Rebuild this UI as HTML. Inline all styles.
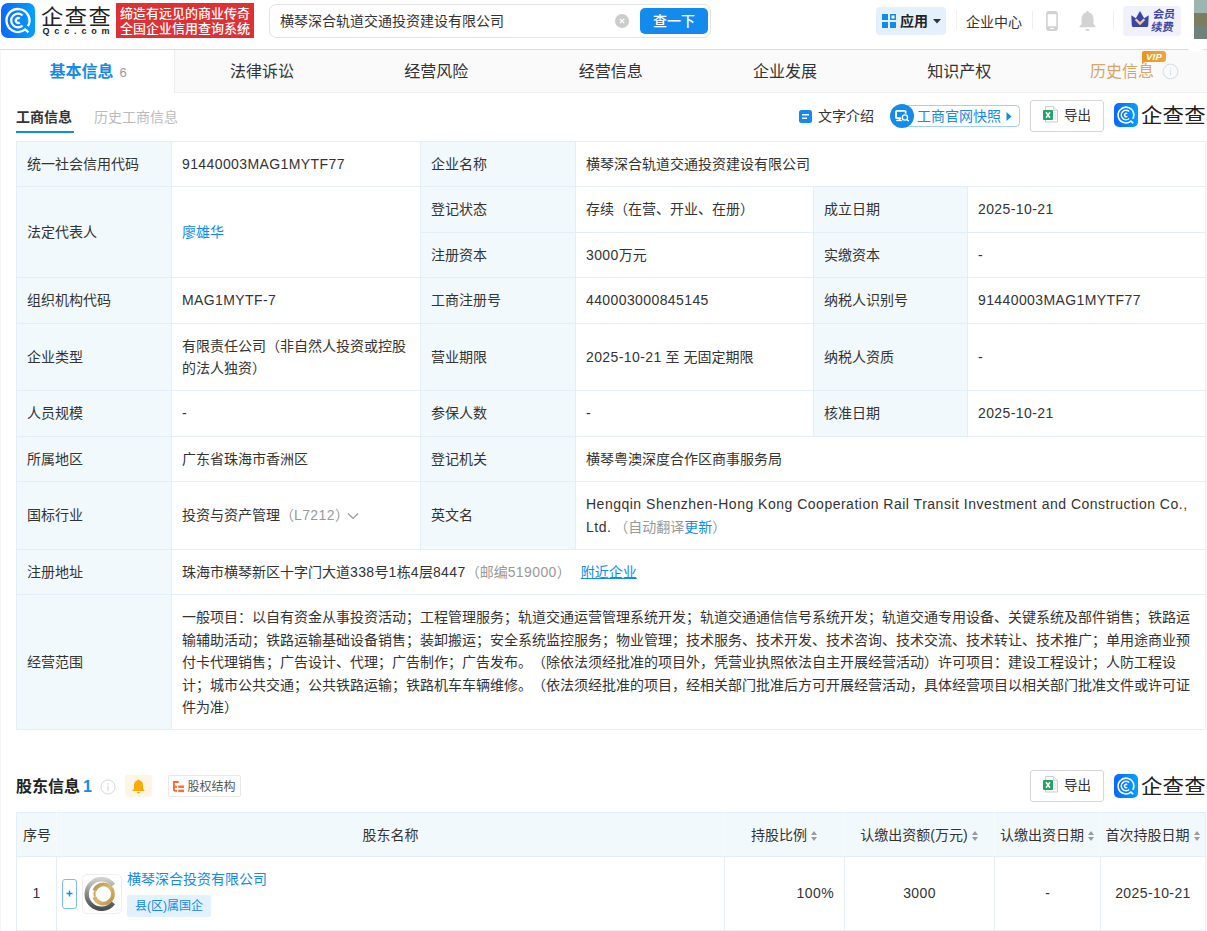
<!DOCTYPE html>
<html lang="zh-CN">
<head>
<meta charset="utf-8">
<title>横琴深合轨道交通投资建设有限公司 - 企查查</title>
<style>
*{box-sizing:border-box;}
html,body{margin:0;padding:0;}
body{text-spacing-trim:space-all;width:1207px;height:931px;overflow:hidden;background:#fff;position:relative;
  font-family:"Liberation Sans","Noto Sans CJK SC",sans-serif;font-size:14px;color:#333;line-height:1.6;}
a{color:#128bed;text-decoration:none;}
.abs{position:absolute;}
div>svg{display:block;}
/* header */
#hd{position:absolute;left:0;top:0;width:1207px;height:49px;background:#fff;}
#hdline{position:absolute;left:0;top:49px;width:1207px;height:1px;background:#dcdcdc;}
#hdline2{position:absolute;left:0;top:50px;width:1207px;height:1px;background:#f3f3f3;}
.logo-ic{position:absolute;left:1px;top:3px;width:34px;height:35px;border-radius:7px;background:linear-gradient(90deg,#0a68ff,#00a0ff);}
.logo-t{position:absolute;left:40.500px;top:2px;font-size:21px;line-height:30px;color:#222;font-weight:400;letter-spacing:1.360px;transform:scaleX(1.06);transform-origin:0 0;white-space:nowrap;}
.logo-s{position:absolute;left:42.500px;top:25.300px;font-size:9px;line-height:12px;font-weight:bold;color:#222;letter-spacing:4.850px;white-space:nowrap;}
.slogan{position:absolute;left:116px;top:3px;width:138px;height:35px;background:#df3033;color:#fff;font-weight:500;font-size:13px;line-height:15px;padding:3px 0 0 4px;white-space:nowrap;}
.sbox{position:absolute;left:269px;top:4px;width:442px;height:34px;border:1px solid #e3e3e3;border-radius:7px;background:#fff;}
.sbox .q{position:absolute;left:10px;top:5px;line-height:22px;font-size:14px;color:#333;white-space:nowrap;}
.sbox .clr{position:absolute;left:345px;top:9px;width:14px;height:14px;border-radius:50%;background:#ccc;}
.sbox .btn{position:absolute;left:370px;top:3px;width:68px;height:26px;border-radius:5px;background:#128bed;color:#fff;font-size:14px;line-height:26px;text-align:center;font-weight:500;}
.app{position:absolute;left:876px;top:7px;width:70px;height:28px;border-radius:4px;background:#e5f0fd;}
.app b{position:absolute;left:24px;top:3px;font-size:14px;line-height:22px;color:#222;}
.vdiv{position:absolute;top:11px;width:1px;height:18px;background:#eee;}
.ecenter{position:absolute;left:966px;top:11px;font-size:14px;line-height:22px;color:#333;white-space:nowrap;}
.vip{position:absolute;left:1123px;top:6px;width:58px;height:30px;border-radius:3px;background:#f0f1fd;}
.vip span{position:absolute;left:28.500px;top:2px;font-size:11.200px;line-height:13.300px;font-weight:bold;color:#3a44a6;white-space:nowrap;transform:skewX(-7deg);}
/* nav tabs */
#nav{position:absolute;left:0;top:50px;width:1221px;height:43px;background:#fafafa;border-bottom:1px solid #eee;}
#nav .t{position:absolute;top:0;width:174.33px;height:42px;text-align:center;font-size:16px;line-height:43.500px;padding-left:1px;color:#333;white-space:nowrap;}
#nav .t.on{background:#fff;height:43px;width:175.33px;padding-left:2px;color:#128bed;font-weight:bold;border-right:1px solid #eee;}
#nav .t.on i{font-style:normal;font-weight:normal;font-size:13px;color:#999;margin-left:6px;}
/* sub tabs */
.st1{position:absolute;left:16px;top:106px;font-weight:bold;color:#333;line-height:22px;white-space:nowrap;}
.st2{position:absolute;left:94px;top:106px;color:#bbb;line-height:22px;white-space:nowrap;}
.stline{position:absolute;left:16px;top:131px;width:58px;height:2px;background:#128bed;}
/* tables */
table{border-collapse:collapse;table-layout:fixed;position:absolute;}
td,th{border:1px solid #e4eef6;padding:11px 10px;line-height:22.4px;font-size:14px;color:#333;text-align:left;font-weight:normal;vertical-align:middle;word-break:break-all;}
td.tb{background:#f2f9fc;}
.g{color:#999;}
.num{letter-spacing:.4px;}
.en{letter-spacing:.5px;}
#t1{left:16px;top:140.940px;width:1189px;}
#t2{left:16px;top:812px;width:1189px;}
#t2 th{background:#f2f9fc;text-align:center;padding:11.300px 4px 9.300px;white-space:nowrap;border-left-color:#f6fbfd;border-right-color:#f6fbfd;}
#t2 th:first-child{border-left-color:#e4eef6;}
#t2 th:last-child{border-right-color:#e4eef6;}
#t2 td{text-align:center;}
.btnx{position:absolute;width:74px;height:32px;border:1px solid #d6d6d6;border-radius:3px;background:#fff;}
.btnx span{position:absolute;left:33px;top:4px;line-height:22px;font-size:13.5px;color:#333;}
.wm-ic{position:absolute;width:24px;height:24px;border-radius:5px;background:linear-gradient(90deg,#0a68ff,#00a0ff);}
.srt{display:inline-block;width:7px;height:10px;margin-left:4px;position:relative;vertical-align:-1px;}
.srt:before{content:"";position:absolute;left:0;top:0;border:3.500px solid transparent;border-bottom:4px solid #9a9a9a;border-top:0;}
.srt:after{content:"";position:absolute;left:0;bottom:0;border:3.500px solid transparent;border-top:4px solid #9a9a9a;border-bottom:0;}
.wm-t{position:absolute;font-size:20px;line-height:28px;color:#222;font-weight:400;white-space:nowrap;letter-spacing:0.200px;margin-left:-1px;margin-top:0.500px;transform:scaleX(1.07);transform-origin:0 0;}
</style>
</head>
<body>
<div id="hd">
  <div class="logo-ic">
    <svg width="34" height="35" viewBox="0 0 34 35"><g fill="none" stroke="#fff" stroke-width="2.300"><path d="M26.960 23.250A11.500 11.500 0 1 0 24.240 26.440L27.500 29.300"/><path d="M21.550 12.450A6.800 6.800 0 1 0 21.550 22.550"/><path d="M18.800 15.700A2.400 2.400 0 1 0 18.800 19.300"/></g></svg>
  </div>
  <div class="logo-t">企查查</div>
  <div class="logo-s">Qcc.com</div>
  <div class="slogan">缔造有远见的商业传奇<br>全国企业信用查询系统</div>
  <div class="sbox">
    <div class="q">横琴深合轨道交通投资建设有限公司</div>
    <div class="clr"><svg width="14" height="14" viewBox="0 0 14 14"><path d="M4.8 4.8l4.4 4.4M9.2 4.8l-4.4 4.4" stroke="#fff" stroke-width="1.2" fill="none"/></svg></div>
    <div class="btn">查一下</div>
  </div>
  <div class="app">
    <svg class="abs" style="left:6px;top:7px" width="14" height="14" viewBox="0 0 14 14"><rect x="0" y="0" width="6" height="6" fill="#128bed"/><rect x="0" y="8" width="6" height="6" fill="#128bed"/><rect x="8" y="8" width="6" height="6" fill="#128bed"/><rect x="8.75" y="0.75" width="4.5" height="4.5" fill="#fff" stroke="#128bed" stroke-width="1.5"/></svg>
    <b>应用</b>
    <svg class="abs" style="left:57px;top:12px" width="8" height="5" viewBox="0 0 8 5"><path d="M0 0h8L4 4.5z" fill="#333"/></svg>
  </div>
  <div class="vdiv" style="left:956px"></div>
  <div class="ecenter">企业中心</div>
  <div class="vdiv" style="left:1032px"></div>
  <svg class="abs" style="left:1046px;top:11px" width="12" height="20" viewBox="0 0 12 20"><rect x="0.900" y="0.800" width="10.200" height="18.400" rx="2.200" fill="none" stroke="#d2d2d2" stroke-width="1.600"/><rect x="0.900" y="0.800" width="10.200" height="2.400" rx="1" fill="#d2d2d2"/><rect x="0.900" y="15.300" width="10.200" height="3.900" fill="#d2d2d2"/><rect x="3.800" y="16.900" width="4.400" height="1.200" rx="0.500" fill="#fff"/></svg>
  <svg class="abs" style="left:1078.500px;top:10.300px" width="17" height="22.400" viewBox="0 0 17 22" preserveAspectRatio="none"><path d="M8.5 1c.9 0 1.4.6 1.4 1.400 3 .7 4.600 3.200 4.600 6.200v5.200l2 2.400v.8H.5v-.8l2-2.400V8.600c0-3 1.600-5.500 4.600-6.200C7.100 1.600 7.600 1 8.500 1z" fill="#d3d3d3"/><path d="M6.300 18.600h4.400c0 1.200-1 2-2.200 2s-2.200-.8-2.200-2z" fill="#d3d3d3"/></svg>
  <div class="vdiv" style="left:1113px"></div>
  <div class="vip">
    <svg class="abs" style="left:8px;top:5px" width="18" height="17" viewBox="0 0 18 17"><path d="M0.300 4.300l4.500 2.900L9 0l4.200 7.200 4.500-2.900-.5 10.500c0 .700-.600 1.200-1.300 1.200H2.100c-.700 0-1.300-.500-1.300-1.200z" fill="#3b45a8"/><path d="M4.600 8.300l4.400 4.300 4.400-4.300" fill="none" stroke="#f7cf8c" stroke-width="2.200"/></svg>
    <span>会员<br>续费</span>
  </div>
  <div class="abs" style="left:1194px;top:0;width:13px;height:13px;background:#9db5b0"></div>
  <div class="abs" style="left:1194px;top:13px;width:13px;height:13px;background:#7c7c5e"></div>
  <div class="abs" style="left:1194px;top:26px;width:13px;height:13px;background:#70817b"></div>
</div>
<div id="hdline"></div>
<div id="nav">
  <div class="t on" style="left:0">基本信息<i>6</i></div>
  <div class="t" style="left:174.33px">法律诉讼</div>
  <div class="t" style="left:348.66px">经营风险</div>
  <div class="t" style="left:523px">经营信息</div>
  <div class="t" style="left:697.33px">企业发展</div>
  <div class="t" style="left:871.66px">知识产权</div>
  <div class="t" style="left:1046px;color:#d6a56a;text-align:left;padding-left:44px">历史信息</div>
</div>
<div class="abs" style="left:1142px;top:51px;width:24px;height:11px;border-radius:2px 3px 3px 0;background:linear-gradient(90deg,#ec9416,#f0a540);color:#fff;font-size:9.500px;line-height:11px;font-weight:bold;font-style:italic;text-align:center;letter-spacing:0.2px">VIP</div>
<svg class="abs" style="left:1142px;top:61px" width="5" height="4" viewBox="0 0 5 4"><path d="M0 0h4.500L0 3.500z" fill="#e9a04a"/></svg>
<svg class="abs" style="left:1162px;top:63px" width="17" height="17" viewBox="0 0 17 17"><circle cx="8.500" cy="8.500" r="7.400" fill="none" stroke="#dae0e8" stroke-width="1.100"/><rect x="7.900" y="7.200" width="1.200" height="5" fill="#dae0e8"/><rect x="7.900" y="4.600" width="1.200" height="1.400" fill="#dae0e8"/></svg>

<div class="st1">工商信息</div>
<div class="st2">历史工商信息</div>
<div class="stline"></div>
<div class="abs" style="left:0;top:51px;width:1px;height:880px;background:#f4f4f4"></div>
<div class="abs" style="left:1188px;top:45px;width:15px;height:7px;border-radius:50%;background:#fff"></div>
<!-- tools row 1 -->
<svg class="abs" style="left:799px;top:110px" width="13" height="13" viewBox="0 0 13 13"><rect x="0" y="0" width="13" height="13" rx="2.5" fill="#128bed"/><rect x="3" y="4" width="7" height="1.5" fill="#fff"/><rect x="3" y="7.500" width="5" height="1.500" fill="#fff"/></svg>
<div class="abs" style="left:818px;top:105px;line-height:22px;color:#333;white-space:nowrap">文字介绍</div>
<div class="abs" style="left:895px;top:105px;width:125px;height:22px;border:1px solid #a6cff7;border-radius:4px;background:#fff"></div>
<div class="abs" style="left:890px;top:104px;width:24px;height:24px;border-radius:50%;background:#128bed">
  <svg width="24" height="24" viewBox="0 0 24 24"><rect x="6" y="6.900" width="9.600" height="7.300" rx="0.800" fill="none" stroke="#fff" stroke-width="1.900"/><path d="M6.200 16.600h7" stroke="#fff" stroke-width="1.100"/><path d="M9.500 15v1.600" stroke="#fff" stroke-width="1.600"/><circle cx="14.900" cy="13.500" r="4" fill="#128bed"/><circle cx="14.900" cy="13.500" r="2.600" fill="#128bed" stroke="#fff" stroke-width="1.400"/><path d="M16.800 15.400l2 1.900" stroke="#fff" stroke-width="1.500"/></svg>
</div>
<div class="abs" style="left:917px;top:104.500px;line-height:23px;color:#128bed;white-space:nowrap">工商官网快照</div>
<svg class="abs" style="left:1006px;top:112px" width="6" height="9" viewBox="0 0 6 9"><path d="M0.500 0l5 4.500-5 4.500z" fill="#128bed"/></svg>
<div class="btnx" style="left:1030px;top:100px">
  <svg class="abs" style="left:12px;top:4.500px" width="16" height="17" viewBox="0 0 16 17"><path d="M2.500 0.500h8l4 4v11.500h-12z" fill="#fff" stroke="#cdcdcd" stroke-width="1"/><path d="M10.500 0.500v4h4" fill="#f0f0f0" stroke="#cdcdcd" stroke-width="0.800"/><path d="M11 7h2.500M11 9h2.500M11 11h2.500M11 13h2.500" stroke="#d0d0d0" stroke-width="0.800"/><rect x="0" y="4" width="10" height="10" rx="1" fill="#21a366"/><path d="M3 6.200l4 5.600M7 6.200l-4 5.600" stroke="#fff" stroke-width="1.500"/></svg>
  <span>导出</span>
</div>
<div class="wm-ic" style="left:1114px;top:103px"><svg width="24" height="24" viewBox="0 0 34 35"><g fill="none" stroke="#fff" stroke-width="2.300"><path d="M26.960 23.250A11.500 11.500 0 1 0 24.240 26.440L27.500 29.300"/><path d="M21.550 12.450A6.800 6.800 0 1 0 21.550 22.550"/><path d="M18.800 15.700A2.400 2.400 0 1 0 18.800 19.300"/></g></svg></div>
<div class="wm-t" style="left:1142px;top:101px">企查查</div>

<table id="t1">
<colgroup><col style="width:155px"><col style="width:249px"><col style="width:155px"><col style="width:238px"><col style="width:154px"><col style="width:238px"></colgroup>
<tr><td class="tb">统一社会信用代码</td><td><span class="num">91440003MAG1MYTF77</span></td><td class="tb">企业名称</td><td colspan="3">横琴深合轨道交通投资建设有限公司</td></tr>
<tr><td class="tb" rowspan="2">法定代表人</td><td rowspan="2"><a>廖雄华</a></td><td class="tb">登记状态</td><td>存续（在营、开业、在册）</td><td class="tb">成立日期</td><td><span class="num">2025-10-21</span></td></tr>
<tr><td class="tb">注册资本</td><td><span class="num">3000</span>万元</td><td class="tb">实缴资本</td><td>-</td></tr>
<tr><td class="tb">组织机构代码</td><td><span class="num">MAG1MYTF-7</span></td><td class="tb">工商注册号</td><td><span class="num">440003000845145</span></td><td class="tb">纳税人识别号</td><td><span class="num">91440003MAG1MYTF77</span></td></tr>
<tr><td class="tb">企业类型</td><td>有限责任公司（非自然人投资或控股的法人独资）</td><td class="tb">营业期限</td><td><span class="num">2025-10-21</span> 至 无固定期限</td><td class="tb">纳税人资质</td><td>-</td></tr>
<tr><td class="tb">人员规模</td><td>-</td><td class="tb">参保人数</td><td>-</td><td class="tb">核准日期</td><td><span class="num">2025-10-21</span></td></tr>
<tr><td class="tb">所属地区</td><td>广东省珠海市香洲区</td><td class="tb">登记机关</td><td colspan="3">横琴粤澳深度合作区商事服务局</td></tr>
<tr><td class="tb">国标行业</td><td>投资与资产管理<span class="g">（<span class="num">L7212</span>）</span><svg width="12" height="8" viewBox="0 0 12 8" style="margin-left:-1.500px;vertical-align:0px"><path d="M1 1.500l5 5 5-5" fill="none" stroke="#999" stroke-width="1.200"/></svg></td><td class="tb">英文名</td><td colspan="3"><span class="en">Hengqin Shenzhen-Hong Kong Cooperation Rail Transit Investment and Construction Co., Ltd.</span><span class="g"><span style="margin-left:3px">（自动翻译<a>更新</a>）</span></span></td></tr>
<tr><td class="tb">注册地址</td><td colspan="5">珠海市横琴新区十字门大道<span class="num">338</span>号<span class="num">1</span>栋<span class="num">4</span>层<span class="num">8447</span><span class="g">（邮编<span class="num">519000</span>）</span><a style="margin-left:10px;text-decoration:underline;text-underline-offset:0.500px;text-decoration-thickness:1px">附近企业</a></td></tr>
<tr><td class="tb">经营范围</td><td colspan="5">一般项目：以自有资金从事投资活动；工程管理服务；轨道交通运营管理系统开发；轨道交通通信信号系统开发；轨道交通专用设备、关键系统及部件销售；铁路运输辅助活动；铁路运输基础设备销售；装卸搬运；安全系统监控服务；物业管理；技术服务、技术开发、技术咨询、技术交流、技术转让、技术推广；单用途商业预付卡代理销售；广告设计、代理；广告制作；广告发布。（除依法须经批准的项目外，凭营业执照依法自主开展经营活动）许可项目：建设工程设计；人防工程设计；城市公共交通；公共铁路运输；铁路机车车辆维修。（依法须经批准的项目，经相关部门批准后方可开展经营活动，具体经营项目以相关部门批准文件或许可证件为准）</td></tr>
</table>

<!-- section 2 -->
<div class="abs" style="left:16px;top:774px;font-size:16px;line-height:26px;font-weight:bold;color:#222;white-space:nowrap">股东信息<span style="color:#128bed;margin-left:3px">1</span></div>
<svg class="abs" style="left:100px;top:779px" width="16" height="16" viewBox="0 0 16 16"><circle cx="8" cy="8" r="7" fill="none" stroke="#d3d8e0" stroke-width="1"/><rect x="7.400" y="6.800" width="1.200" height="5" fill="#d3d8e0"/><rect x="7.400" y="4.200" width="1.200" height="1.400" fill="#d3d8e0"/></svg>
<div class="abs" style="left:125px;top:775px;width:27px;height:22px;border-radius:3px;background:#fff5e4"></div>
<svg class="abs" style="left:132px;top:779px" width="13" height="15" viewBox="0 0 13 15"><path d="M6.500 0.500c.7 0 1.100.500 1.100 1 2.200.500 3.400 2.300 3.400 4.500v3.800l1.500 1.700v.600H.5v-.600l1.500-1.700V6c0-2.200 1.200-4 3.400-4.500 0-.500.400-1 1.100-1z" fill="#ffaa00"/><path d="M4.800 13h3.400c0 .900-.800 1.500-1.700 1.500s-1.700-.600-1.700-1.500z" fill="#ffaa00"/></svg>
<div class="abs" style="left:167.500px;top:775px;width:73.500px;height:22px;border:1px solid #e8e8e8;border-radius:2px;background:#fff"></div>
<svg class="abs" style="left:172.500px;top:781px" width="11.500" height="11.500" viewBox="0 0 11 11"><path d="M0 0.900h5.500M0.900 0.900v8.600M0.900 5.500h3M0.900 9.500h3" stroke="#ff6a33" stroke-width="1.800" fill="none"/><rect x="5" y="4.300" width="6" height="2.300" fill="#ff6a33"/><rect x="5" y="8.300" width="6" height="2.300" fill="#ff6a33"/></svg>
<div class="abs" style="left:187.500px;top:775.500px;font-size:12px;line-height:23px;color:#555;white-space:nowrap">股权结构</div>
<div class="btnx" style="left:1030px;top:770px">
  <svg class="abs" style="left:12px;top:4.500px" width="16" height="17" viewBox="0 0 16 17"><path d="M2.500 0.500h8l4 4v11.500h-12z" fill="#fff" stroke="#cdcdcd" stroke-width="1"/><path d="M10.500 0.500v4h4" fill="#f0f0f0" stroke="#cdcdcd" stroke-width="0.800"/><path d="M11 7h2.500M11 9h2.500M11 11h2.500M11 13h2.500" stroke="#d0d0d0" stroke-width="0.800"/><rect x="0" y="4" width="10" height="10" rx="1" fill="#21a366"/><path d="M3 6.200l4 5.600M7 6.200l-4 5.600" stroke="#fff" stroke-width="1.500"/></svg>
  <span>导出</span>
</div>
<div class="wm-ic" style="left:1114px;top:774px"><svg width="24" height="24" viewBox="0 0 34 35"><g fill="none" stroke="#fff" stroke-width="2.300"><path d="M26.960 23.250A11.500 11.500 0 1 0 24.240 26.440L27.500 29.300"/><path d="M21.550 12.450A6.800 6.800 0 1 0 21.550 22.550"/><path d="M18.800 15.700A2.400 2.400 0 1 0 18.800 19.300"/></g></svg></div>
<div class="wm-t" style="left:1142px;top:772px">企查查</div>
<table id="t2">
<colgroup><col style="width:40px"><col style="width:668px"><col style="width:120px"><col style="width:150px"><col style="width:106px"><col style="width:105px"></colgroup>
<tr><th style="text-align:left;padding-left:6px">序号</th><th>股东名称</th><th>持股比例<i class="srt"></i></th><th>认缴出资额(万元)<i class="srt"></i></th><th>认缴出资日期<i class="srt"></i></th><th>首次持股日期<i class="srt"></i></th></tr>
<tr style="height:74px"><td>1</td><td style="position:relative;padding:0">
  <div class="abs" style="left:5px;top:21.500px;width:15px;height:30px;border:1px solid #7dbbf5;border-radius:3px;background:#fff"></div>
  <svg class="abs" style="left:9px;top:33px" width="7" height="7" viewBox="0 0 7 7"><path d="M3.500 0.500v6M0.500 3.500h6" stroke="#128bed" stroke-width="1.400"/></svg>
  <div class="abs" style="left:24.800px;top:16.700px;width:40px;height:40px;border:1px solid #eee;border-radius:5px;background:#fff">
    <svg width="38" height="38" viewBox="0 0 38 38"><defs><linearGradient id="gy" x1="0" y1="0" x2="0" y2="1"><stop offset="0" stop-color="#cfcfcf"/><stop offset="0.450" stop-color="#8f8f8f"/><stop offset="1" stop-color="#4a4d4d"/></linearGradient><linearGradient id="gd" x1="0" y1="0" x2="1" y2="1"><stop offset="0" stop-color="#b8934f"/><stop offset="0.500" stop-color="#dcb96f"/><stop offset="1" stop-color="#b98f45"/></linearGradient></defs>
    <path d="M30.300 10.100A14.800 14.800 0 1 0 30.300 27.900" fill="none" stroke="url(#gy)" stroke-width="4.400"/>
    <path d="M11.470 15.750A9.500 9.500 0 1 1 11.470 22.250" fill="none" stroke="url(#gd)" stroke-width="3.800"/>
    <path d="M11.900 16.300A9 9 0 0 0 11.900 21.700" fill="none" stroke="#c9a45e" stroke-width="2"/></svg>
  </div>
  <a class="abs" style="left:70px;top:11px;line-height:22px;white-space:nowrap">横琴深合投资有限公司</a>
  <div class="abs" style="left:70px;top:37.500px;height:22px;padding:0 8px;border-radius:2px;background:#e3f1fd;color:#128bed;font-size:12px;line-height:22px;white-space:nowrap">县(区)属国企</div>
</td><td style="text-align:right"><span class="num">100%</span></td><td><span class="num">3000</span></td><td>-</td><td><span class="num">2025-10-21</span></td></tr>
</table>

</body>
</html>
